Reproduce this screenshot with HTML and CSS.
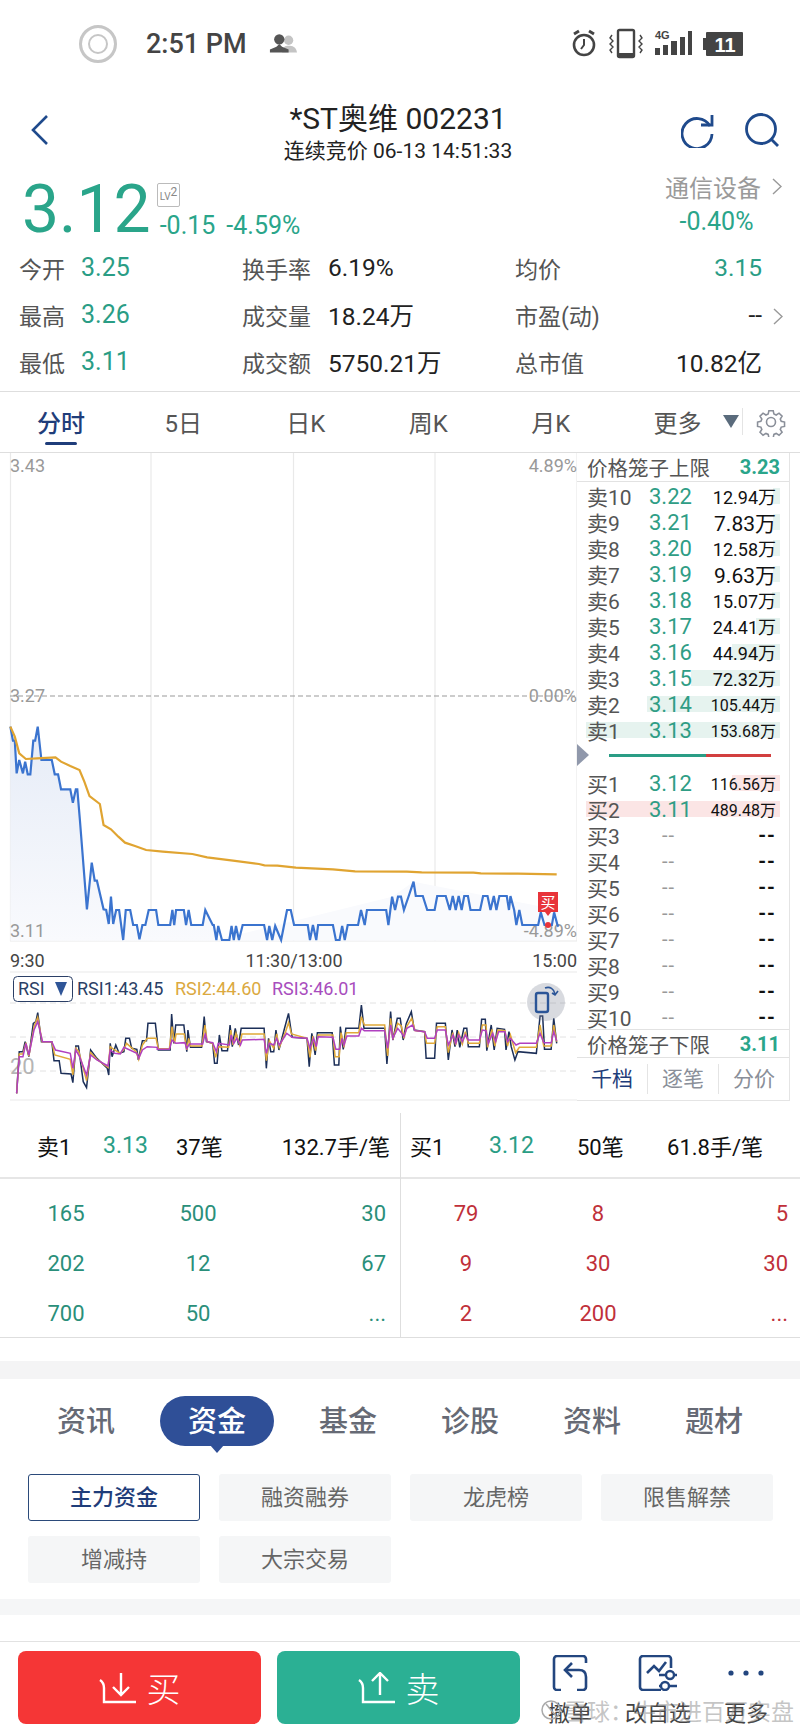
FILE: index.html
```html
<!DOCTYPE html>
<html lang="zh">
<head>
    <meta charset="utf-8">
    <title>*ST奥维 002231</title>
    <link rel="stylesheet" href="styles.css">
</head>
<body>
<div class="page">

    <div class="status">
        <span class="status-ring"></span>
        <span class="status-time">2:51 PM</span>
        <svg class="status-user" width="28" height="22" viewBox="0 0 30 22">
            <circle cx="21" cy="7" r="5" fill="#c4c4c4"/><path d="M14 20c1-6 3-7 7-7s8 1 9 7z" fill="#c4c4c4"/>
            <circle cx="11" cy="6" r="5.5" fill="#555"/><path d="M11 11l-3 3-7 3v3h20v-3l-7-3z" fill="#555"/>
        </svg>
        <span class="grow"></span>
        <svg class="status-icons" width="172" height="32" viewBox="0 0 172 32">
            <g fill="none" stroke="#444" stroke-width="2.6">
                <circle cx="13" cy="17" r="10"/>
                <path d="M13 11v6l-3 4" stroke-width="2"/>
                <path d="M3 6l5-3M23 6l-5-3" stroke-width="3"/>
            </g>
            <rect x="47" y="2" width="16" height="27" rx="1.5" fill="none" stroke="#444" stroke-width="2.4"/>
            <rect x="47" y="25" width="16" height="4" fill="#444"/>
            <path d="M41 7l-2 3 3 3-3 3 3 3-3 3 2 3M69 7l2 3-3 3 3 3-3 3 3 3-2 3" fill="none" stroke="#444" stroke-width="1.4"/>
            <text x="84" y="11" class="icon-4g">4G</text>
            <rect x="84" y="20" width="5" height="7" fill="#444"/>
            <rect x="92" y="17" width="5" height="10" fill="#444"/>
            <rect x="100" y="13" width="6" height="14" fill="#444"/>
            <rect x="109" y="9" width="5" height="18" fill="#444"/>
            <rect x="117" y="3" width="4" height="24" fill="#444"/>
            <rect x="132" y="10" width="4" height="12" fill="#444"/>
            <rect x="135" y="4" width="37" height="24" rx="1" fill="#444"/>
            <text x="154" y="24" class="icon-batt">11</text>
        </svg>
    </div>

    <header class="head">
        <svg class="head-back" width="18" height="30" viewBox="0 0 18 30"><path d="M16 1L2 15l14 14" fill="none" stroke="#1f4a8c" stroke-width="2.6"/></svg>
        <div class="head-title">
            <div class="head-name">*ST奥维 002231</div>
            <div class="head-sub">连续竞价 06-13 14:51:33</div>
        </div>
        <svg class="head-refresh" width="34" height="34" viewBox="0 0 34 34">
            <path d="M29 12A15 15 0 1 0 31 20" fill="none" stroke="#1f4a8c" stroke-width="2.8"/>
            <path d="M20 11h11V1" fill="none" stroke="#1f4a8c" stroke-width="2.8"/>
        </svg>
        <svg class="head-search" width="35" height="34" viewBox="0 0 35 34">
            <circle cx="16" cy="16" r="14.5" fill="none" stroke="#1f4a8c" stroke-width="2.8"/>
            <path d="M26 26l7 7" stroke="#1f4a8c" stroke-width="2.8"/>
        </svg>
    </header>

    <section class="quote">
        <div class="quote-main">
            <span class="quote-price">3.12</span>
            <span class="quote-lv">LV<sup>2</sup></span>
            <span class="quote-chg">-0.15</span>
            <span class="quote-chg">-4.59%</span>
        </div>
        <div class="quote-sector">
            <div class="sector-name">通信设备<svg width="10" height="17" viewBox="0 0 10 17"><path d="M1 1l8 7.5-8 7.5" fill="none" stroke="#999" stroke-width="1.4"/></svg></div>
            <div class="sector-chg">-0.40%</div>
        </div>
    </section>

    <section class="stats">
        <div class="stat-row">
            <span class="stat-a">今开</span><span class="stat-b up">3.25</span>
            <span class="stat-c">换手率</span><span class="stat-d">6.19%</span>
            <span class="stat-e">均价</span><span class="stat-f stat-up">3.15</span>
        </div>
        <div class="stat-row">
            <span class="stat-a">最高</span><span class="stat-b up">3.26</span>
            <span class="stat-c">成交量</span><span class="stat-d">18.24万</span>
            <span class="stat-e">市盈(动)</span><span class="stat-f">--</span>
            <svg class="stat-more" width="10" height="17" viewBox="0 0 10 17"><path d="M1 1l8 7.5-8 7.5" fill="none" stroke="#999" stroke-width="1.4"/></svg>
        </div>
        <div class="stat-row">
            <span class="stat-a">最低</span><span class="stat-b up">3.11</span>
            <span class="stat-c">成交额</span><span class="stat-d">5750.21万</span>
            <span class="stat-e">总市值</span><span class="stat-f">10.82亿</span>
        </div>
    </section>

    <nav class="tabs">
        <span class="tab tab-on">分时</span>
        <span class="tab">5日</span>
        <span class="tab">日K</span>
        <span class="tab">周K</span>
        <span class="tab">月K</span>
        <span class="tab tab-more">更多</span>
        <span class="tab-arrow"></span>
        <span class="tab-sep"></span>
        <svg class="tab-gear" width="30" height="30" viewBox="0 0 30 30">
            <path d="M12.5 2h5l.8 3.800 2.600 1.100 3.300-2.100 3.500 3.500-2.100 3.300 1.100 2.600 3.800.8v5l-3.800.8-1.100 2.600 2.100 3.300-3.500 3.500-3.300-2.100-2.600 1.100-.8 3.800h-5l-.8-3.800-2.600-1.100-3.300 2.100-3.500-3.500 2.100-3.300-1.100-2.600-3.800-.8v-5l3.800-.8 1.100-2.600-2.100-3.300 3.500-3.500 3.300 2.100 2.600-1.100z" transform="translate(2 2) scale(.87)" fill="none" stroke="#8a8f99" stroke-width="1.8"/>
            <circle cx="15" cy="15" r="4.5" fill="none" stroke="#8a8f99" stroke-width="1.6"/>
        </svg>
    </nav>

    <section class="market">
        <svg class="chart" width="577" height="648" viewBox="0 453 577 648">
            <defs>
                <linearGradient id="area" x1="0" y1="0" x2="0" y2="1">
                    <stop offset="0" stop-color="#e6ecf7"/>
                    <stop offset="1" stop-color="#f9fafd"/>
                </linearGradient>
            </defs>

            <g stroke="#e9e9e9" stroke-width="1.2">
                <path d="M10.5 453V941M151 453V941M293.5 453V941M435 453V941M577 453V941"/>
                <path d="M10 941H577M10 972H577M10 1100H577"/>
            </g>
            <path d="M10 696H577" stroke="#999" stroke-width="1" stroke-dasharray="5 3"/>

            <!-- price lines, points read off the picture -->
            <g transform="translate(0 710) scale(.3699 .33333)">
                <polygon fill="url(#area)" points="28,692 28,50 35,92 40,92 45,190 52,150 62,190 68,155 75,193 82,193 90,92 95,92 102,50 112,150 140,150 148,193 157,193 165,238 190,238 197,278 205,238 209,238 216,330 235,598 248,458 256,512 262,512 280,598 287,600 294,642 300,560 306,642 314,600 322,600 333,690 340,600 352,600 360,645 370,645 377,688 385,645 393,645 402,600 422,600 428,645 460,645 466,600 471,645 476,600 497,600 503,645 510,600 517,645 548,645 555,600 575,645 578,645 585,690 1510,692"/>
                <polygon fill="#f9fafd" points="585,690 1060,560 1118,515 1510,600 1510,692"/>
            </g>

            <g class="axis">
                <text x="10" y="472">3.43</text>
                <text x="10" y="702">3.27</text>
                <text x="10" y="937">3.11</text>
                <text x="577" y="472" text-anchor="end">4.89%</text>
                <text x="577" y="702" text-anchor="end">0.00%</text>
                <text x="577" y="937" text-anchor="end">-4.89%</text>
            </g>
            <g class="times">
                <text x="10" y="967">9:30</text>
                <text x="294" y="967" text-anchor="middle">11:30/13:00</text>
                <text x="577" y="967" text-anchor="end">15:00</text>
            </g>

            <g transform="translate(0 710) scale(.3699 .33333)">
                <polyline class="line-price" points="28,50 35,92 40,92 45,190 52,150 62,190 68,155 75,193 82,193 90,92 95,92 102,50 112,150 140,150 148,193 157,193 165,238 190,238 197,278 205,238 209,238 216,330 235,598 248,458 256,512 262,512 280,598 287,600 294,642 300,560 306,642 314,600 322,600 333,690 340,600 352,600 360,645 370,645 377,688 385,645 393,645 402,600 422,600 428,645 460,645 466,600 471,645 476,600 497,600 503,645 510,600 517,645 548,645 555,600 575,645 578,645 585,690 590,648 600,690 620,690 626,648 632,690 638,648 646,690 656,645 714,645 722,690 728,648 736,690 744,648 760,690 776,600 786,600 795,645 832,645 838,690 846,645 855,690 860,645 900,645 908,690 918,690 925,648 932,690 940,645 968,645 976,600 986,645 992,600 1044,600 1050,645 1060,560 1068,600 1076,560 1084,560 1092,600 1105,558 1118,515 1124,558 1143,558 1155,600 1175,600 1182,558 1205,558 1216,600 1224,558 1232,600 1240,558 1248,600 1255,558 1265,558 1272,600 1298,600 1306,558 1318,558 1326,600 1335,558 1342,600 1350,558 1370,558 1376,600 1380,558 1390,600 1396,645 1404,600 1412,645 1455,645 1462,607 1472,645 1492,645 1498,607 1507,645 1510,650"/>
                <polyline class="line-avg" points="28,50 40,80 52,130 70,147 100,145 150,142 165,155 190,168 215,180 228,215 242,258 270,282 280,345 300,358 320,380 338,398 365,408 395,420 440,425 520,432 560,442 630,452 700,462 715,466 750,467 800,473 900,478 960,484 1100,485 1140,487 1280,488 1300,490 1400,491 1505,493"/>
            </g>

            <rect x="538" y="892" width="20" height="20" fill="#e8343a"/>
            <path d="M545 912h6l-3 4z" fill="#e8343a"/>
            <text x="548" y="908" class="buy-mark" text-anchor="middle">买</text>
            <circle cx="548" cy="925" r="3" fill="#e8343a"/>

            <!-- rsi panel -->
            <path d="M10 1003H577M10 1037H577M10 1071H577" stroke="#e2e2e2" stroke-dasharray="6 4"/>
            <rect x="13.5" y="976.5" width="59" height="25" rx="4" fill="#fff" stroke="#2b3f66"/>
            <text x="18" y="995" class="rsi rsi-k">RSI</text>
            <path d="M55 982h12l-6 14z" fill="#2f5597"/>
            <text x="77" y="995" class="rsi rsi-k">RSI1:43.45</text>
            <text x="175" y="995" class="rsi rsi-y">RSI2:44.60</text>
            <text x="272" y="995" class="rsi rsi-p">RSI3:46.01</text>
            <text x="10" y="1074" class="axis-rsi">20</text>

            <g transform="translate(0 710) scale(.3699 .33333)">
                <polyline class="line-rsi" stroke="#1c2f58" points="45,1150 52,1025 62,1025 68,995 78,1040 90,940 97,935 102,908 112,995 140,995 146,1052 160,1052 165,1090 192,1092 197,1118 205,1008 212,1008 225,1115 234,1133 245,1020 262,1045 290,1075 294,1095 298,1000 303,1040 313,1005 322,1030 335,1025 340,985 350,985 356,1015 370,1018 374,1050 385,992 396,992 400,940 420,940 428,1020 460,1020 464,912 470,1000 475,945 497,945 505,1025 508,960 515,1012 545,1012 552,920 558,995 575,1000 580,1060 587,1060 593,975 600,1022 615,1022 622,945 628,1010 636,955 645,1005 652,955 714,955 720,1075 726,985 732,1025 740,1025 746,960 754,1020 768,960 780,910 786,955 790,982 830,985 836,1070 843,970 852,1035 858,968 898,968 904,1065 916,1065 920,950 928,1018 935,955 970,955 977,885 984,955 1040,955 1046,1062 1056,905 1062,990 1074,925 1082,925 1090,990 1098,942 1112,905 1120,960 1148,965 1152,1045 1175,1045 1180,940 1204,940 1212,1050 1222,960 1230,1010 1236,960 1243,1012 1254,955 1262,955 1266,1010 1296,1010 1302,928 1312,928 1316,1022 1328,945 1336,1020 1344,955 1364,958 1368,1020 1376,965 1382,1010 1392,1050 1400,1025 1450,1030 1460,918 1467,918 1472,1018 1490,1018 1497,925 1505,1000"/>
                <polyline class="line-rsi" stroke="#e0a93a" points="45,1150 52,1032 62,1032 70,998 78,1038 92,950 102,922 114,995 140,995 148,1035 190,1048 197,1095 205,1015 213,1025 234,1112 245,1028 262,1048 292,1072 298,1010 310,1020 325,1030 335,1018 342,1000 368,1025 375,1048 385,1005 398,985 422,985 428,1016 458,1016 465,950 472,1000 476,972 498,972 505,1020 510,985 515,1008 546,1008 554,945 560,995 575,1000 583,1042 590,1010 618,1012 624,960 630,1005 638,970 648,1005 654,972 714,972 720,1052 728,992 740,1015 748,972 755,1012 772,965 780,938 788,972 830,985 838,1042 846,978 853,1022 860,975 900,975 906,1040 917,1040 922,968 930,1012 936,968 970,968 977,920 985,945 1040,945 1048,1038 1056,925 1062,988 1075,940 1085,948 1092,985 1100,948 1113,925 1122,962 1148,965 1153,1000 1175,1000 1182,950 1204,950 1212,1028 1224,968 1232,1005 1240,968 1250,1002 1258,965 1266,1000 1296,1000 1304,945 1314,945 1318,1012 1330,958 1338,1008 1346,960 1365,962 1372,1008 1380,975 1394,1028 1404,1012 1450,1012 1460,945 1470,1008 1490,1008 1497,945 1505,995"/>
                <polyline class="line-rsi" stroke="#b040c0" points="45,1150 52,1040 62,1040 70,1000 78,1035 92,960 102,935 115,995 140,995 150,1020 190,1030 197,1075 205,1020 215,1040 234,1095 245,1035 262,1050 292,1068 298,1020 310,1030 325,1032 335,1012 370,1030 375,1045 385,1020 398,1010 425,1012 425,1018 458,1018 465,990 475,1000 500,998 505,1015 512,1002 548,1002 555,970 560,995 575,998 585,1025 590,1000 620,1005 625,975 632,1000 640,985 650,1005 655,990 714,988 720,1030 728,1000 740,1005 748,985 755,1005 775,970 790,982 830,985 838,1015 848,985 855,1010 860,980 900,982 908,1018 918,1018 925,985 930,1005 938,978 970,978 977,955 985,962 1040,962 1048,1015 1056,945 1062,985 1075,955 1085,968 1092,980 1100,955 1115,945 1122,962 1148,965 1155,985 1175,985 1182,960 1204,960 1212,1005 1225,975 1232,1000 1240,975 1250,995 1258,975 1266,990 1296,990 1304,960 1314,962 1320,1000 1332,970 1340,995 1348,965 1365,965 1372,995 1380,985 1395,1005 1405,1000 1450,1000 1460,970 1470,998 1490,998 1497,965 1505,992"/>
            </g>

            <circle cx="546" cy="1002" r="19" fill="#7f8696" fill-opacity=".3"/>
            <rect x="536" y="993" width="12" height="19" rx="2" fill="none" stroke="#2b5597" stroke-width="2.4"/>
            <path d="M545 988c5-2 9 1 10 6m-3-1l3 2 3-4" fill="none" stroke="#2b5597" stroke-width="1.6"/>
        </svg>

        <div class="book">
            <div class="book-limit book-limit-top"><span>价格笼子上限</span><b>3.23</b></div>
            <div class="book-rows">
                <div class="level"><i class="bar bar-sell" style="width:7px"></i><span class="lv-name">卖10</span><span class="lv-price">3.22</span><span class="lv-vol">12.94万</span></div>
                <div class="level"><i class="bar bar-sell" style="width:7px"></i><span class="lv-name">卖9</span><span class="lv-price">3.21</span><span class="lv-vol lv-big">7.83万</span></div>
                <div class="level"><i class="bar bar-sell" style="width:7px"></i><span class="lv-name">卖8</span><span class="lv-price">3.20</span><span class="lv-vol">12.58万</span></div>
                <div class="level"><i class="bar bar-sell" style="width:7px"></i><span class="lv-name">卖7</span><span class="lv-price">3.19</span><span class="lv-vol lv-big">9.63万</span></div>
                <div class="level"><i class="bar bar-sell" style="width:8px"></i><span class="lv-name">卖6</span><span class="lv-price">3.18</span><span class="lv-vol">15.07万</span></div>
                <div class="level"><i class="bar bar-sell" style="width:24px"></i><span class="lv-name">卖5</span><span class="lv-price">3.17</span><span class="lv-vol">24.41万</span></div>
                <div class="level"><i class="bar bar-sell" style="width:48px"></i><span class="lv-name">卖4</span><span class="lv-price">3.16</span><span class="lv-vol">44.94万</span></div>
                <div class="level"><i class="bar bar-sell" style="width:89px"></i><span class="lv-name">卖3</span><span class="lv-price">3.15</span><span class="lv-vol">72.32万</span></div>
                <div class="level"><i class="bar bar-sell" style="width:133px"></i><span class="lv-name">卖2</span><span class="lv-price">3.14</span><span class="lv-vol lv-small">105.44万</span></div>
                <div class="level"><i class="bar bar-sell" style="width:194px"></i><span class="lv-name">卖1</span><span class="lv-price">3.13</span><span class="lv-vol lv-small">153.68万</span></div>
            </div>
            <div class="book-split"><span class="split-mark"></span><span class="split-bar"></span></div>
            <div class="book-rows">
                <div class="level"><i class="bar bar-buy" style="width:48px"></i><span class="lv-name">买1</span><span class="lv-price">3.12</span><span class="lv-vol lv-small">116.56万</span></div>
                <div class="level"><i class="bar bar-buy" style="width:194px"></i><span class="lv-name">买2</span><span class="lv-price">3.11</span><span class="lv-vol lv-small">489.48万</span></div>
                <div class="level"><span class="lv-name">买3</span><span class="lv-price lv-none">--</span><span class="lv-vol lv-dash">--</span></div>
                <div class="level"><span class="lv-name">买4</span><span class="lv-price lv-none">--</span><span class="lv-vol lv-dash">--</span></div>
                <div class="level"><span class="lv-name">买5</span><span class="lv-price lv-none">--</span><span class="lv-vol lv-dash">--</span></div>
                <div class="level"><span class="lv-name">买6</span><span class="lv-price lv-none">--</span><span class="lv-vol lv-dash">--</span></div>
                <div class="level"><span class="lv-name">买7</span><span class="lv-price lv-none">--</span><span class="lv-vol lv-dash">--</span></div>
                <div class="level"><span class="lv-name">买8</span><span class="lv-price lv-none">--</span><span class="lv-vol lv-dash">--</span></div>
                <div class="level"><span class="lv-name">买9</span><span class="lv-price lv-none">--</span><span class="lv-vol lv-dash">--</span></div>
                <div class="level"><span class="lv-name">买10</span><span class="lv-price lv-none">--</span><span class="lv-vol lv-dash">--</span></div>
            </div>
            <div class="book-limit book-limit-low"><span>价格笼子下限</span><b>3.11</b></div>
            <div class="book-tabs">
                <span class="book-tab book-tab-on">千档</span>
                <span class="book-tab">逐笔</span>
                <span class="book-tab">分价</span>
            </div>
        </div>
    </section>

    <section class="queue">
        <div class="queue-side">
            <div class="queue-head">
                <span class="q-a">卖1</span><span class="q-b">3.13</span><span class="q-c">37笔</span><span class="q-d">132.7手/笔</span>
            </div>
            <div class="queue-grid sell">
                <span>165</span><span>500</span><span>30</span>
                <span>202</span><span>12</span><span>67</span>
                <span>700</span><span>50</span><span>...</span>
            </div>
        </div>
        <div class="queue-side queue-buy">
            <div class="queue-head">
                <span class="q-a">买1</span><span class="q-b">3.12</span><span class="q-c">50笔</span><span class="q-d">61.8手/笔</span>
            </div>
            <div class="queue-grid buy">
                <span>79</span><span>8</span><span>5</span>
                <span>9</span><span>30</span><span>30</span>
                <span>2</span><span>200</span><span>...</span>
            </div>
        </div>
    </section>

    <div class="gap-band"></div>

    <section class="info">
        <div class="info-tabs">
            <span class="info-tab">资讯</span>
            <span class="info-tab info-tab-on">资金</span>
            <span class="info-tab">基金</span>
            <span class="info-tab">诊股</span>
            <span class="info-tab">资料</span>
            <span class="info-tab">题材</span>
        </div>
        <div class="chips">
            <span class="chip chip-on">主力资金</span>
            <span class="chip">融资融券</span>
            <span class="chip">龙虎榜</span>
            <span class="chip">限售解禁</span>
            <span class="chip">增减持</span>
            <span class="chip">大宗交易</span>
        </div>
    </section>

    <div class="gap-thin"></div>

    <footer class="bottom">
        <button class="trade trade-buy">
            <svg width="38" height="32" viewBox="0 0 38 32"><path d="M1 8c3 2 4 4 4 8v14h32M22 1v22M14 15l8 8 8-8" fill="none" stroke="#fff" stroke-width="2.4"/></svg>
            <span>买</span>
        </button>
        <button class="trade trade-sell">
            <svg width="38" height="32" viewBox="0 0 38 32"><path d="M1 8c3 2 4 4 4 8v14h32M22 23V1M14 9l8-8 8 8" fill="none" stroke="#fff" stroke-width="2.4"/></svg>
            <span>卖</span>
        </button>
        <div class="act">
            <svg width="36" height="36" viewBox="0 0 36 36">
                <path d="M9 35H5a3 3 0 0 1-3-3V4a3 3 0 0 1 3-3h26a3 3 0 0 1 3 3v4M25 35h6a3 3 0 0 0 3-3V22c0-5-3-7-7-7H13" fill="none" stroke="#23467f" stroke-width="2.6"/>
                <path d="M20 8l-7 7 7 7" fill="none" stroke="#23467f" stroke-width="2.6"/>
            </svg>
            <span>撤单</span>
        </div>
        <div class="act">
            <svg width="40" height="36" viewBox="0 0 40 36">
                <path d="M33 13V4a3 3 0 0 0-3-3H5a3 3 0 0 0-3 3v28a3 3 0 0 0 3 3h18" fill="none" stroke="#23467f" stroke-width="2.6"/>
                <path d="M9 18l7-7 5 5 7-9" fill="none" stroke="#23467f" stroke-width="2.6"/>
                <path d="M21 20h18M21 31h18" stroke="#23467f" stroke-width="2.4"/>
                <circle cx="32" cy="20" r="4" fill="#fff" stroke="#23467f" stroke-width="2.4"/>
                <circle cx="27" cy="31" r="4" fill="#fff" stroke="#23467f" stroke-width="2.4"/>
            </svg>
            <span>改自选</span>
        </div>
        <div class="act">
            <svg width="36" height="36" viewBox="0 0 36 36"><circle cx="3" cy="18" r="2.6" fill="#23467f"/><circle cx="18" cy="18" r="2.6" fill="#23467f"/><circle cx="33" cy="18" r="2.6" fill="#23467f"/></svg>
            <span>更多</span>
        </div>
        <div class="watermark">
            <svg width="20" height="20" viewBox="0 0 20 20"><circle cx="10" cy="10" r="9" fill="none" stroke="#aaa" stroke-width="1.5"/><path d="M5 4l10 12" stroke="#aaa" stroke-width="1.5"/></svg>
            <span>雪球：牛市进百万实盘</span>
        </div>
    </footer>

</div>
</body>
</html>
```

FILE: styles.css
```css
* {
    box-sizing: border-box;
}
html, body {
    margin: 0;
    background: #fff;
}
body {
    font-family: Roboto, "Noto Sans CJK SC", sans-serif;
    color: #111;
}
.page {
    width: 800px;
    height: 1733px;
    overflow: hidden;
}
.grow {
    flex: 1;
}
.up {
    color: #2a9d85;
}

/* status bar */
.status {
    height: 90px;
    display: flex;
    align-items: center;
    padding: 0 57px 2px 79px;
}
.status-ring {
    width: 38px;
    height: 38px;
    border-radius: 50%;
    border: 3px solid #c6c6c6;
    box-shadow: inset 0 0 0 6px #fff, inset 0 0 0 8px #c6c6c6;
}
.status-time {
    font-size: 27px;
    color: #444;
    margin-left: 29px;
    font-weight: 500;
}
.status-user {
    margin-left: 22px;
}
.icon-4g {
    font: bold 11px "Liberation Sans", sans-serif;
    fill: #444;
}
.icon-batt {
    font: bold 20px "Liberation Sans", sans-serif;
    fill: #fff;
    text-anchor: middle;
}

/* title */
.head {
    height: 80px;
    display: flex;
    align-items: flex-start;
    padding: 22px 20px 0 31px;
}
.head-back {
    margin-top: 3px;
}
.head-title {
    flex: 1;
    text-align: center;
    margin-top: -11px;
    padding-left: 66px;
}
.head-name {
    font-size: 30px;
    line-height: 36px;
    color: #222;
}
.head-sub {
    font-size: 21px;
    line-height: 28px;
    color: #222;
}
.head-refresh {
    margin-top: 2px;
}
.head-search {
    margin-left: 30px;
    margin-top: 1px;
}

/* price */
.quote {
    height: 74px;
    display: flex;
    justify-content: space-between;
    padding: 0 18px 0 22px;
}
.quote-main {
    display: flex;
    align-items: flex-end;
    height: 74px;
    position: relative;
}
.quote-price {
    font-size: 66px;
    line-height: 68px;
    color: #2aa58a;
    margin-right: 9px;
}
.quote-lv {
    position: absolute;
    left: 135px;
    top: 13px;
    width: 23px;
    height: 24px;
    border: 1px solid #bbb;
    border-radius: 2px;
    font-size: 10px;
    line-height: 26px;
    color: #888;
    text-align: center;
    white-space: nowrap;
}
.quote-lv sup {
    font-size: 12px;
    line-height: 0;
}
.quote-chg {
    font-size: 25px;
    line-height: 28px;
    color: #2aa58a;
    margin-right: 11px;
    margin-bottom: 4px;
}
.quote-sector {
    width: 117px;
    text-align: center;
    padding-top: 4px;
}
.sector-name {
    font-size: 24px;
    line-height: 30px;
    color: #9a9a9a;
    display: flex;
    align-items: flex-start;
    justify-content: flex-end;
}
.sector-name svg {
    margin: 4px 0 0 11px;
}
.sector-chg {
    font-size: 25px;
    line-height: 36px;
    color: #2aa58a;
    padding-right: 14px;
}

/* stats */
.stats {
    height: 148px;
    border-bottom: 1px solid #dedede;
}
.stat-row {
    height: 47px;
    display: flex;
    align-items: center;
    font-size: 23px;
    padding-left: 19px;
    position: relative;
}
.stat-a {
    width: 62px;
    color: #555;
}
.stat-b {
    width: 161px;
    font-size: 25px;
}
.stat-c {
    width: 86px;
    color: #555;
}
.stat-d {
    width: 187px;
    color: #222;
    font-size: 24.5px;
}
.stat-e {
    width: 120px;
    color: #555;
}
.stat-f {
    width: 127px;
    text-align: right;
    color: #222;
    font-size: 24.5px;
}
.stat-up {
    color: #2a9d85;
}
.stat-more {
    position: absolute;
    left: 773px;
    top: 17px;
}

/* tabs */
.tabs {
    height: 61px;
    display: flex;
    align-items: center;
    border-bottom: 1px solid #dedede;
    padding-bottom: 1px;
}
.tab {
    width: 122.5px;
    text-align: center;
    font-size: 24px;
    color: #555;
}
.tab-on {
    color: #1f3d7a;
    font-weight: 500;
    position: relative;
    width: 122px;
}
.tab-on::after {
    content: "";
    position: absolute;
    left: 45px;
    top: 38px;
    width: 32px;
    height: 3px;
    border-radius: 2px;
    background: #1f3d7a;
}
.tab-more {
    margin-left: 4px;
    width: 123px;
}
.tab-arrow {
    width: 0;
    height: 0;
    margin-left: -16px;
    border-left: 8px solid transparent;
    border-right: 8px solid transparent;
    border-top: 13px solid #5a6b7c;
}
.tab-sep {
    width: 1px;
    height: 27px;
    margin-left: 3px;
    background: #e4e4e4;
}
.tab-gear {
    margin-left: 13px;
}

/* chart and order book */
.market {
    display: flex;
    height: 648px;
}
.chart {
    flex: none;
    display: block;
}
.axis text {
    font-size: 18px;
    fill: #999;
}
.axis-rsi {
    font-size: 22px;
    fill: #b5b5b5;
}
.times text {
    font-size: 18px;
    fill: #444;
}
.buy-mark {
    font-size: 15px;
    fill: #fff;
}
.rsi {
    font-size: 18px;
}
.rsi-k {
    fill: #2b3f66;
}
.rsi-y {
    fill: #dba93f;
}
.rsi-p {
    fill: #a84dbd;
}
.line-price, .line-avg, .line-rsi {
    fill: none;
    vector-effect: non-scaling-stroke;
}
.line-price {
    stroke: #3b74cf;
    stroke-width: 2.2;
}
.line-avg {
    stroke: #e0a431;
    stroke-width: 2.2;
}
.line-rsi {
    stroke-width: 1.5;
}

.book {
    width: 213px;
    height: 648px;
    border-right: 1px solid #e4e4e4;
    border-bottom: 1px solid #e4e4e4;
    display: flex;
    flex-direction: column;
}
.book-limit {
    display: flex;
    justify-content: space-between;
    align-items: center;
    padding: 0 9px 0 10px;
    font-size: 20.5px;
    color: #555;
    border-bottom: 1px solid #e2e2e2;
}
.book-limit b {
    color: #2aa58a;
    font-size: 20px;
}
.book-limit-top {
    height: 29px;
    flex: none;
    margin-bottom: 1px;
}
.book-limit-low {
    height: 29px;
    flex: none;
    border-top: 1px solid #e2e2e2;
    margin-top: -1px;
}
.book-rows {
    flex: none;
}
.level {
    height: 26px;
    display: flex;
    align-items: center;
    position: relative;
    font-size: 21px;
    color: #555;
    padding-left: 10px;
}
.bar {
    position: absolute;
    right: 9px;
    top: 5px;
    height: 16px;
}
.bar-sell {
    background: #e6f3ef;
}
.bar-buy {
    background: #fbe5e5;
}
.lv-name, .lv-price, .lv-vol {
    position: relative;
}
.lv-name {
    width: 62px;
}
.lv-price {
    width: 52px;
    font-size: 22px;
    color: #2f9d85;
}
.lv-none {
    color: #999;
    font-size: 20px;
    letter-spacing: 1px;
    padding-left: 13px;
}
.lv-vol {
    width: 75px;
    text-align: right;
    font-size: 18px;
    color: #111;
    white-space: nowrap;
}
.lv-big {
    font-size: 21px;
}
.lv-small {
    font-size: 16px;
}
.lv-dash {
    font-weight: bold;
    font-size: 20px;
    letter-spacing: 1px;
}
.book-split {
    height: 27px;
    flex: none;
    display: flex;
    align-items: center;
    padding-bottom: 3px;
}
.split-mark {
    width: 0;
    height: 0;
    border-top: 11px solid transparent;
    border-bottom: 11px solid transparent;
    border-left: 12px solid #9098ab;
}
.split-bar {
    width: 162px;
    height: 3px;
    margin-left: 20px;
    background: linear-gradient(to right, #2a9d85 60%, #d23f3f 60%);
}
.book-tabs {
    flex: 1;
    display: flex;
    align-items: center;
}
.book-tab {
    flex: 1;
    text-align: center;
    font-size: 21px;
    color: #8a8f99;
    line-height: 30px;
    border-left: 1px solid #e4e4e4;
}
.book-tab:first-child {
    border-left: none;
}
.book-tab-on {
    color: #1f3d7a;
}

/* sell and buy queues */
.queue {
    height: 237px;
    display: flex;
    border-bottom: 1px solid #dedede;
    font-size: 22px;
}
.queue-side {
    width: 400px;
    padding-top: 12px;
}
.queue-buy {
    margin-top: 12px;
    padding-top: 0;
    border-left: 1px solid #dedede;
}
.queue-head {
    height: 66px;
    display: flex;
    align-items: center;
    border-bottom: 2px solid #e6e6e6;
    color: #111;
    position: relative;
}
.q-a {
    position: absolute;
    left: 37px;
}
.q-b {
    position: absolute;
    left: 103px;
    font-size: 23px;
    color: #2a9d85;
}
.q-c {
    position: absolute;
    left: 176px;
}
.q-d {
    position: absolute;
    right: 10px;
}
.queue-buy .q-a {
    left: 9px;
}
.queue-buy .q-b {
    left: 88px;
}
.queue-buy .q-c {
    left: 176px;
}
.queue-buy .q-d {
    right: 37px;
}
.queue-grid {
    display: grid;
    grid-template-columns: 132px 132px 122px;
    grid-auto-rows: 50px;
    padding-top: 9px;
    font-size: 22px;
    align-items: center;
    text-align: center;
}
.queue-grid span:nth-child(3n) {
    text-align: right;
}
.sell {
    color: #2a8f7a;
}
.buy {
    grid-template-columns: 132px 132px 124px;
    color: #c0303a;
    margin-left: -1px;
}

.gap-band {
    height: 18px;
    margin-top: 23px;
    background: #f4f4f5;
}
.gap-thin {
    height: 16px;
    background: #f5f6f7;
}

/* info tabs */
.info {
    height: 220px;
}
.info-tabs {
    display: flex;
    padding: 17px 0 0 28px;
    height: 95px;
}
.info-tab {
    width: 122px;
    font-size: 29px;
    line-height: 52px;
    font-weight: 500;
    color: #666a75;
    text-align: center;
}
.info-tab:first-child {
    width: 114px;
    text-align: left;
    padding-left: 29px;
}
.info-tab-on {
    width: 114px;
    height: 50px;
    border-radius: 25px;
    background: #2f4f97;
    color: #fff;
    margin: 0 13px 0 18px;
    position: relative;
}
.info-tab-on::after {
    content: "";
    position: absolute;
    left: 50px;
    top: 49px;
    border-left: 7px solid transparent;
    border-right: 7px solid transparent;
    border-top: 8px solid #2f4f97;
}
.chips {
    display: grid;
    grid-template-columns: repeat(4, 172px);
    grid-auto-rows: 47px;
    gap: 15px 19px;
    padding-left: 28px;
}
.chip {
    background: #f5f6f7;
    border-radius: 3px;
    font-size: 22px;
    line-height: 47px;
    color: #666;
    text-align: center;
}
.chip-on {
    background: #fff;
    border: 1px solid #2b4a7a;
    color: #1f3d7a;
    font-weight: 500;
    line-height: 45px;
}

/* bottom bar */
.bottom {
    position: relative;
    margin-top: 26px;
    border-top: 1px solid #e2e2e2;
    display: flex;
    padding: 9px 0 0 18px;
    height: 92px;
}
.trade {
    width: 243px;
    height: 73px;
    border: none;
    border-radius: 8px;
    color: #fff;
    font-family: "Noto Sans CJK SC", sans-serif;
    font-size: 34px;
    font-weight: 300;
    display: flex;
    align-items: center;
    justify-content: center;
    gap: 10px;
    padding: 0;
}
.trade-buy {
    background: #f53636;
}
.trade-sell {
    background: #2bb094;
    margin-left: 16px;
}
.act {
    width: 88px;
    display: flex;
    flex-direction: column;
    align-items: center;
    font-size: 22px;
    color: #444;
    line-height: 30px;
    padding-top: 4px;
}
.act:nth-of-type(1) {
    margin-left: 6px;
}
.act svg {
    height: 36px;
    margin-bottom: 8px;
}
.watermark {
    position: absolute;
    left: 541px;
    top: 51px;
    display: flex;
    align-items: center;
    gap: 3px;
    font-size: 23px;
    color: rgba(140, 140, 140, .5);
    white-space: nowrap;
}
```
